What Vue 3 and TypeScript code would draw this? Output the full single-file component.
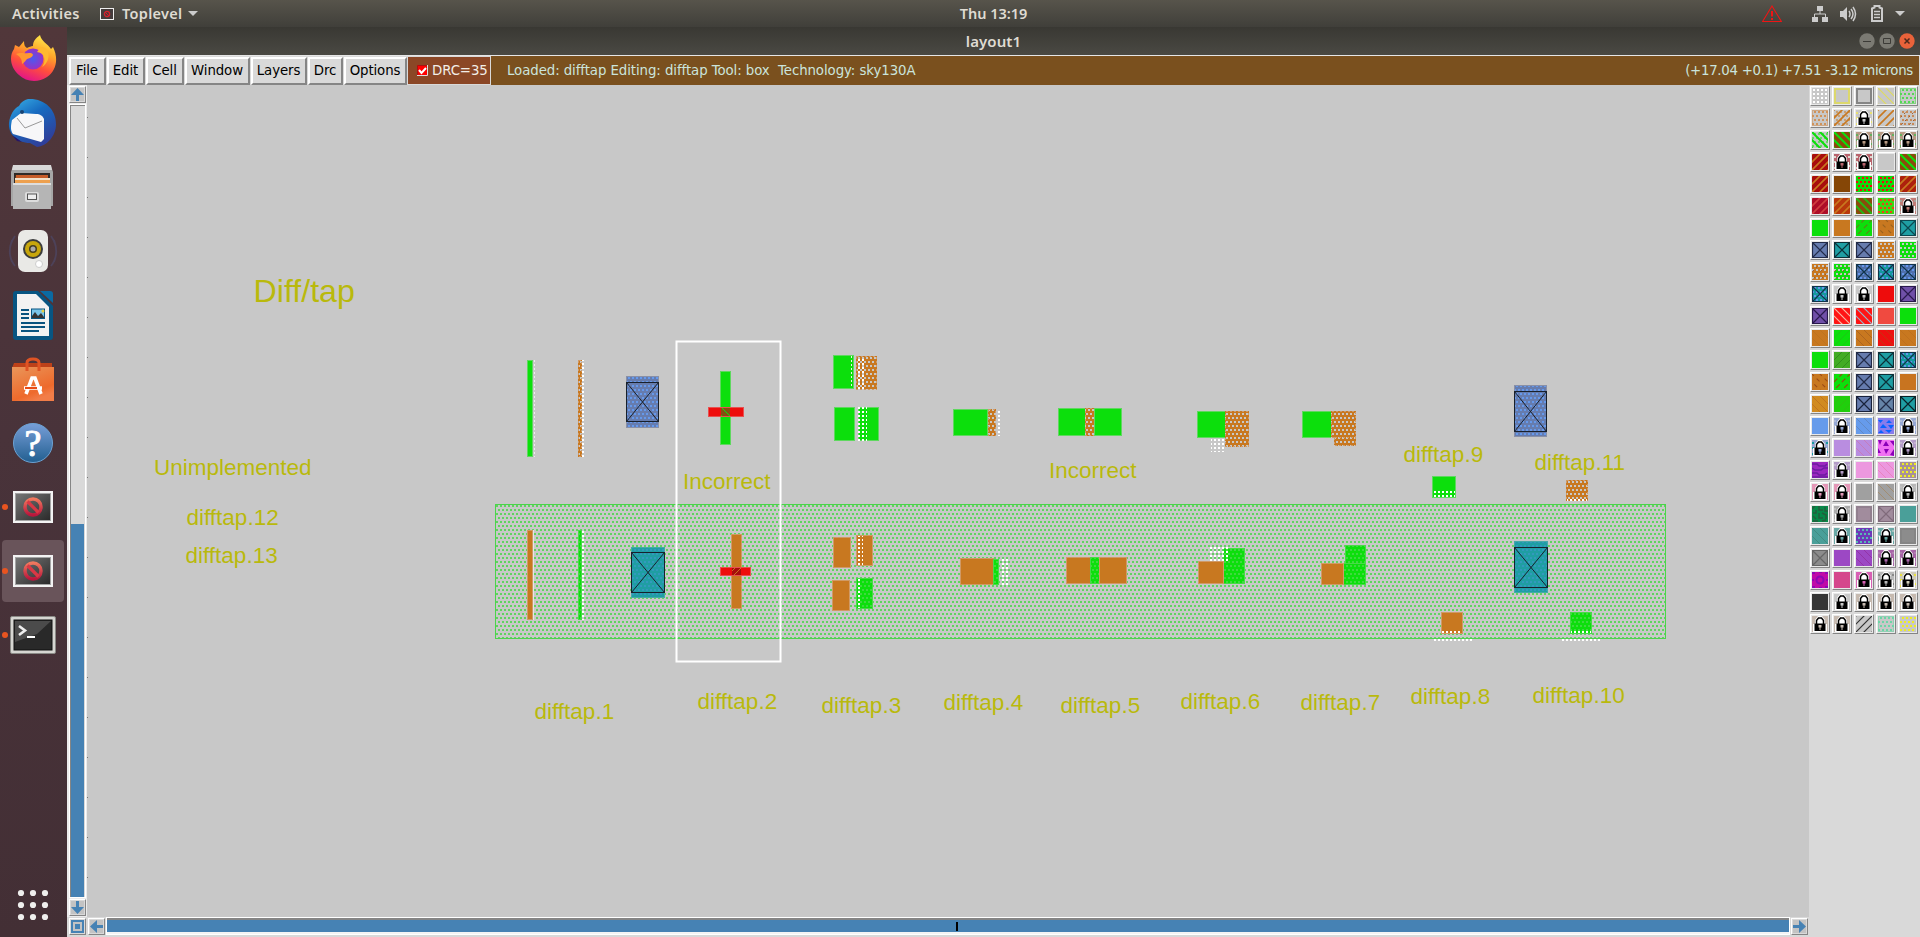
<script setup lang="ts">
type Rect = [kind: string, x: number, y: number, w: number, h: number]
type Label = [text: string, x: number, y: number, size?: number]
interface Swatch { kind: string; base: string; ink: string }

const menus: [string, number][] = [
  ['File', 37], ['Edit', 38], ['Cell', 38], ['Window', 65], ['Layers', 56], ['Drc', 35], ['Options', 63],
]

const G = '#0cdf0c', O = '#c87820', R = '#ee0c0c', B = '#667cae', T = '#1f9ea3', C = '#c8c8c8', P = '#7050a8'
// One entry per layer button: kind|base|ink
const rows: string[][] = [
  [`dots|${C}|#ffffff`, `frame|${C}|#dcd86c`, `frame|${C}|#858585`, `bmid|${C}|#dfdb60`, `dotsf|${C}|#55d855`],
  [`dotsf|${C}|#d0935a`, `dfs|${C}|${O}`, `lock|${C}|#e8e070`, `fs|${C}|${O}`, `dotsb|${C}|#c88a58`],
  [`dbs|${C}|${G}`, `bs|#8b4a0c|${G}`, `lock|#b79a84|#65b060`, `lock|#b79a84|#65b060`, `lock|#b79a84|#65b060`],
  [`fs|#a80d0d|${O}`, 'lock|#b9636c|#ded8ce', 'lock|#b9636c|#ded8ce', `solid|${C}|${C}`, `bs|#8b4a0c|${G}`],
  [`fs|#a80d0d|${O}`, 'solid|#854606|#854606', `dots|${G}|${R}`, `dotsb|${G}|${R}`, `fs|#ad200d|${O}`],
  [`fs|#ad0d28|#d03f40`, `fs|#b8380c|${O}`, `bs|#8b4a0c|#28b414`, `dots|#38d914|#ee4018`, 'lock|#c17d77|#a8a098'],
  [`solid|${G}|${G}`, `solid|${O}|${O}`, `dash|${G}|#628018`, `bdash|${O}|#9a621e`, `x|${T}|#0c4850`],
  [`x|${B}|#222b48`, `x|${T}|#0c3038`, `x|${B}|#222b48`, `dots|${O}|${C}`, `dots|${G}|${C}`],
  [`dotsb|${O}|${C}`, `dotsb|${G}|${C}`, 'xd|#506fa8|#6496eb', 'xd|#159aa0|#6496eb', 'xd|#5071ae|#6496eb'],
  ['xd|#159aa0|#6496eb', 'lock|#c8c8c8|#c8c8c8', 'lock|#c8c8c8|#c8c8c8', `solid|${R}|${R}`, `x|${P}|#29194c`],
  [`x|${P}|#29194c`, 'bmid|#ff1414|#f8b6a0', 'bmid|#ff1414|#9cb3c4', 'solid|#f04a40|#f04a40', `solid|${G}|${G}`],
  [`bthin|${O}|#bb7320`, `fthin|${G}|#22bf16`, `bthin|${O}|#a6611f`, 'bthin|#ee1010|#bb3c12', `bthin|${O}|#be701e`],
  [`solid|${G}|${G}`, 'fthin|#42ac24|#2f881c', `x|${B}|#222b48`, `x|${T}|#0c3038`, 'xd|#159aa0|#6496eb'],
  [`bdash|${O}|#9b4b16`, `dash|${G}|#a04010`, `x|${B}|#222b48`, `x|${T}|#0c3038`, 'solid|#c87420|#c87420'],
  [`bthin|#d18b20|#bc7020`, 'fthin|#20cf0c|#32bc10', `x|${B}|#18213a`, 'x|#6684a8|#222b48', `x|${T}|#082228`],
  ['solid|#669beb|#669beb', 'lock|#95a8d4|#b0bcd8', 'bthin|#669beb|#5f85bd', 'tri|#887cec|#0864ff', 'lock|#95a8d4|#b0bcd8'],
  ['lock|#95a8d4|#189aa0', 'solid|#b98de0|#b98de0', 'bthin|#b98de0|#c778b4', 'trid|#f070f2|#8a00b8', 'lock|#b49cc8|#c4b4d0'],
  ['wave|#9c28c0|#6c1ca0', 'lock|#b49cc8|#c4b4d0', 'solid|#ec98df|#ec98df', 'bthin|#ec98df|#e87eb8', 'dots|#a89099|#eeee22'],
  ['lock|#e498b8|#e498b8', 'lock|#e498b8|#e498b8', 'solid|#a0a0a0|#a0a0a0', 'bthin|#a0a0a0|#a28866', 'lock|#b8b8b8|#c0c0c0'],
  ['maze|#078848|#245e3c', 'lock|#aaaaaa|#c0c0c0', 'frame|#a18c9d|#92808f', 'x|#a18c9d|#806b7b', 'solid|#4a9f99|#4a9f99'],
  ['bthin|#4a9f99|#40887c', 'lock|#6aa9a6|#6aa9a6', 'dots|#6d38b8|#58b9b2', 'lock|#6aa9a6|#a4c0bd', 'frame|#8c8c8c|#858585'],
  ['x|#8c8c8c|#666666', 'solid|#9c48c4|#9c48c4', 'bthin|#9c48c4|#9130a0', 'lock|#a865a8|#b080b0', 'lock|#a865a8|#b080b0'],
  ['ring|#c00aa8|#8c08b4', 'solid|#d5478c|#d5478c', 'lock|#d860b4|#d860b4', 'lock|#b8b8b8|#888888', 'lock|#d0ccb8|#e8e040'],
  ['solid|#363636|#363636', 'lock|#c8c8c8|#c8c8c8', 'lock|#c6bab0|#c6bab0', 'lock|#c6bab0|#c6bab0', 'lock|#c6bab0|#c6bab0'],
  ['lock|#c6bab0|#c6bab0', 'lock|#c6bab0|#c6bab0', `fmid|${C}|#333333`, `dotsf|${C}|#6cd6a6`, `dots|${C}|#eeee22`],
]
const swatches: Swatch[] = rows.flat().map((s) => {
  const [kind, base, ink] = s.split('|')
  return { kind, base, ink }
})

function diagonals(step: number, back: boolean): string {
  let d = ''
  for (let k = back ? -16 : 0; k <= 32; k += step) d += back ? `M${k - 1} -1l18 18` : `M${k + 1} -1l-18 18`
  return d
}
function dotGrid(): string {
  let d = ''
  for (let r = 0; r < 4; r++)
    for (let c = 0; c < 4; c++) d += `M${c * 4 + (r % 2 ? 0 : 2)} ${r * 4 + 1}h2v2h-2z`
  return d
}
const squareGrid = [0, 1, 2, 3].flatMap((r) => [0, 1, 2, 3].map((c) => `M${c * 4 + 1} ${r * 4 + 1}h2v2h-2z`)).join('')
const dots = dotGrid()

function strokeFor(kind: string): { d: string; w: number; dash?: string } | null {
  switch (kind) {
    case 'frame': return { d: 'M1 1h14v14H1z', w: 2 }
    case 'bthin': return { d: diagonals(8, true), w: 0.8 }
    case 'fthin': return { d: diagonals(8, false), w: 0.8 }
    case 'bmid': return { d: diagonals(8, true), w: 1.2 }
    case 'fmid': return { d: diagonals(8, false), w: 1.2 }
    case 'bs': case 'dbs': return { d: diagonals(8, true), w: 2 }
    case 'fs': case 'dfs': return { d: diagonals(8, false), w: 1.6 }
    case 'dash': return { d: diagonals(8, false), w: 1.1, dash: '5 3' }
    case 'bdash': return { d: diagonals(8, true), w: 1.1, dash: '4 4' }
    case 'dotsb': return { d: diagonals(8, false), w: 1, dash: '2 3' }
    case 'x': return { d: 'M.5.5h15v15H.5zM1 1l14 14M15 1L1 15', w: 1.2 }
    case 'wave': return { d: 'M0 2h5l2 2h6l2-2M0 6l3 2h6l3-2h4M0 11h5l2 2h6l2-2M0 15h16', w: 1.4 }
    case 'maze': return { d: 'M0 3l3-3M1 7h3V4M7 0v4h4M13 1v4h3M1 10l3 3M7 7v5h4M10 7l4 2v4M1 15h5M10 15l4-1', w: 1.5 }
    default: return null
  }
}

const shapes: Rect[] = [
  ['g', 527, 360, 6, 97], ['wd', 534, 360, 1, 97],
  ['oh', 578, 360, 4, 97], ['w', 582, 360, 3, 97],
  ['blue', 626, 376, 33, 52],
  ['g', 720, 371, 11, 74], ['r', 708, 407, 36, 10],
  ['g', 833, 355, 21, 34], ['wd', 851, 356, 1, 32], ['oh', 856, 356, 21, 34], ['w', 857, 357, 8, 33],
  ['g', 834, 407, 21, 34], ['g', 858, 407, 21, 34], ['w', 858, 407, 9, 34],
  ['g', 953, 409, 35, 27], ['oh', 988, 409, 8, 27], ['w', 997, 410, 3, 26],
  ['g', 1058, 408, 28, 28], ['oh', 1085, 408, 10, 28], ['g', 1094, 408, 28, 28],
  ['g', 1197, 411, 29, 27], ['oh', 1225, 411, 24, 36], ['ws', 1211, 438, 14, 14],
  ['g', 1302, 411, 30, 27], ['oh', 1331, 411, 25, 27], ['oh', 1334, 437, 22, 9],
  ['blue', 1514, 385, 33, 52],
  ['g', 1432, 476, 24, 22], ['ws', 1433, 489, 22, 8],
  ['oh', 1566, 480, 22, 21], ['ws', 1567, 499, 20, 3],
  ['o', 527, 530, 6, 90], ['wl', 533, 530, 1, 90],
  ['gh', 578, 530, 4, 90], ['w', 582, 530, 3, 90],
  ['teal', 631, 547, 34, 51],
  ['o', 731, 534, 11, 75], ['r', 720, 567, 31, 9],
  ['o', 833, 537, 18, 31], ['o', 856, 535, 17, 31], ['ws', 857, 536, 6, 30],
  ['o', 832, 580, 18, 31], ['gh', 856, 578, 17, 31], ['ws', 857, 579, 4, 29],
  ['o', 960, 558, 34, 27], ['gh', 993, 559, 6, 26], ['ws', 1000, 559, 8, 26],
  ['o', 1066, 557, 25, 27], ['gh', 1090, 557, 10, 27], ['o', 1099, 557, 28, 27],
  ['gh', 1223, 548, 22, 36], ['o', 1198, 561, 26, 23], ['ws', 1210, 547, 18, 14],
  ['gh', 1345, 545, 21, 20], ['gh', 1343, 563, 23, 22], ['o', 1321, 563, 23, 22],
  ['teal', 1514, 541, 34, 52],
  ['o', 1441, 612, 22, 22], ['ws', 1442, 631, 20, 3],
  ['gh', 1570, 612, 22, 22], ['ws', 1571, 631, 20, 3],
  ['ws', 1434, 639, 38, 2], ['ws', 1562, 639, 38, 2],
]
const wells: [number, number, number, number][] = [
  [626.5, 382.5, 32, 39], [1514.5, 391.5, 32, 40], [631.5, 552.5, 33, 40], [1514.5, 547.5, 33, 40],
]
const fills: Record<string, string> = {
  g: G, o: O, r: R, blue: 'url(#blue)', teal: 'url(#teal)', oh: 'url(#oh)', gh: 'url(#gh)', w: 'url(#wsq)', ws: 'url(#wsq)', wd: 'url(#wdash)', wl: '#e6e6e6',
}
const labels: Label[] = [
  ['Diff/tap', 253.5, 302, 32.2], ['Unimplemented', 154, 475], ['difftap.12', 186.5, 524.500], ['difftap.13', 185.5, 562.500],
  ['Incorrect', 683, 489], ['Incorrect', 1049, 478], ['difftap.9', 1403.500, 461.500], ['difftap.11', 1534.500, 469.500],
  ['difftap.1', 534.500, 718.500], ['difftap.2', 697.500, 709], ['difftap.3', 821.500, 713], ['difftap.4', 943.500, 710],
  ['difftap.5', 1060.500, 713], ['difftap.6', 1180.500, 709], ['difftap.7', 1300.500, 710], ['difftap.8', 1410.500, 704], ['difftap.10', 1532.500, 702.500],
]
const ticks = Array.from({ length: 20 }, (_, i) => 117 + i * 40)
const outlined = (k: string) => ['g', 'o', 'r', 'oh', 'gh', 'blue', 'teal'].includes(k)
const edge: Record<string, string> = { g: '#5fd85f', o: '#d09a66', r: '#e85050', oh: '#cf9a68', gh: '#48da48', blue: '#8890a8', teal: '#45a9a8' }
</script>

<template>
  <div class="desktop">
    <header class="topbar">
      <span class="activities">Activities</span>
      <svg class="appicon" width="14" height="12" viewBox="0 0 14 12"><rect x=".5" y=".5" width="13" height="11" fill="#443c3c" stroke="#eee" /><circle cx="7" cy="6" r="2.6" fill="none" stroke="#d8202c" stroke-width="1.3" /><path d="M5.2 4l3.6 4" stroke="#d8202c" /></svg>
      <span>Toplevel</span>
      <svg class="caret" width="10" height="5" viewBox="0 0 10 5"><path d="M0 0h10L5 5z" fill="#ccc" /></svg>
      <span class="clock">Thu 13:19</span>
      <div class="tray">
        <svg width="20" height="18" viewBox="0 0 20 18"><path d="M10 1L19.4 16.5H.6z" fill="none" stroke="#ef1515" stroke-width="1.1" /><path d="M10 6v5.5M10 13v2" stroke="#ef1515" stroke-width="2" /></svg>
        <svg class="net" width="16" height="16" viewBox="0 0 16 16"><path d="M5 0h6v5H5zM0 11h6v5H0zM10 11h6v5h-6z" fill="#ccc" /><path d="M8 5v3M2.5 11V8h11v3" fill="none" stroke="#ccc" /></svg>
        <svg class="vol" width="17" height="16" viewBox="0 0 17 16"><path d="M0 5h3l4-4v14l-4-4H0z" fill="#ccc" /><path d="M9 5q2 3 0 6M11 3q4 5 0 10M13 1q5 7 0 14" fill="none" stroke="#ccc" stroke-width="1.5" /></svg>
        <svg class="bat" width="12" height="17" viewBox="0 0 12 17"><path d="M3.5 2.5V1h5v1.500L11 3.500v12.500H1V3.500z" fill="none" stroke="#ccc" stroke-width="2" /><path d="M3 6.500h6M3 9.500h6M3 12.500h6" stroke="#ccc" stroke-width="1.700" /></svg>
        <svg class="down" width="10" height="5" viewBox="0 0 10 5"><path d="M0 0h10L5 5z" fill="#ccc" /></svg>
      </div>
    </header>

    <div class="work">
      <nav class="dock">
        <div class="slot"><svg width="50" height="50" viewBox="0 0 50 50">
          <defs>
            <linearGradient id="fx" x1=".8" y1="0" x2=".4" y2="1"><stop offset="0" stop-color="#fff44f" /><stop offset=".38" stop-color="#ffa52a" /><stop offset=".68" stop-color="#ff4f3c" /><stop offset="1" stop-color="#e31587" /></linearGradient>
            <radialGradient id="fxc"><stop offset="0" stop-color="#4b5af0" /><stop offset="1" stop-color="#9a31c4" /></radialGradient>
          </defs>
          <path d="M32 1c1 6 8 9 11 14l2-2c6 12 3 24-6 30-9 6-21 5-28-2C2 33 1 22 6 15l1-4 4 2 5-6c0 4 1 6 3 7 2-1 4-2 6-2C25 7 28 4 32 1z" fill="url(#fx)" />
          <circle cx="25" cy="25" r="10.500" fill="url(#fxc)" />
          <path d="M8 20c5-2 7 0 13-1 4 0 6 2 1 5-5 1-4 4-8 6 0-4-1-7-6-10z" fill="#ff9830" /><path d="M29 18c9 1 9 10 5 15 9-5 9-20-1-20z" fill="#ffb92f" />
        </svg></div>
        <div class="slot"><svg width="50" height="50" viewBox="0 0 50 50">
          <defs><linearGradient id="tb" x1="0" y1="0" x2=".6" y2="1"><stop offset="0" stop-color="#3bb3e8" /><stop offset=".45" stop-color="#176bc0" /><stop offset="1" stop-color="#2f3f9a" /></linearGradient></defs>
          <path d="M20 1c16-1 28 10 28 25 0 12-9 22-19 23l-7-4C9 45 0 36 1 25 2 17 6 10 11 8c2-4 5-6 9-7z" fill="url(#tb)" />
          <path d="M4 22l9-7 15 1c4 0 7 2 8 5v20l-3 3L5 36c-3-4-2-9-1-14z" fill="#f7f7f8" /><path d="M9 20l8 10 17-7" fill="none" stroke="#999" /><path d="M4 37l10 7-5-1z" fill="#261568" /><circle cx="14" cy="14" r="2" fill="#174372" />
        </svg></div>
        <div class="slot"><svg width="44" height="44" viewBox="0 0 44 44">
          <path d="M2 1h38l2 6v34H0V7z" fill="#a6a6a6" /><path d="M2 0h38l1 5H1z" fill="#d8d8d8" /><path d="M3 8h36v12H3z" fill="#302a27" /><path d="M5 10h32v10H4z" fill="#c65c28" /><path d="M4 13h35v6H4z" fill="#f2e0c8" /><path d="M4 15h35v3H4z" fill="#eda04e" /><path d="M2 18h38v26H2z" fill="#b5b5b5" /><path d="M2 18h38v2H2z" fill="#ddd" /><rect x="14" y="27" width="14" height="10" rx="2" fill="#ddd" /><rect x="16.500" y="29" width="9" height="5.500" fill="#eee" stroke="#555" />
        </svg></div>
        <div class="slot"><svg width="50" height="50" viewBox="0 0 50 50">
          <path d="M7 10C0 20 0 31 7 40M43 10c7 10 7 21 0 30M4 14c-3 8-3 15 0 22M46 14c3 8 3 15 0 22" fill="none" stroke="#4d4259" stroke-width="1.800" /><rect x="10" y="4" width="30" height="42" rx="7" fill="#e9e9e6" /><circle cx="25" cy="23" r="10" fill="#3b3c3c" /><circle cx="25" cy="23" r="8" fill="#c7a60c" /><circle cx="25" cy="23" r="4" fill="#463e20" /><circle cx="25" cy="23" r="2.500" fill="#aaa" /><circle cx="31" cy="38" r="3.500" fill="#fff" stroke="#ccc" />
        </svg></div>
        <div class="slot"><svg width="40" height="50" viewBox="0 0 40 50">
          <path d="M3 1h22l15 15v31q0 3-3 3H3q-3 0-3-3V4q0-3 3-3z" fill="#075582" /><path d="M4 4h19l13 13v29H4z" fill="#f2f2f2" /><path d="M27 1h10q3 0 3 3v9z" fill="#0b6aa2" /><path d="M8 20h8M8 24h8M8 28h8M8 33h24M8 37h24M8 41h18" stroke="#09537f" stroke-width="2" /><rect x="18.500" y="19" width="13" height="9.500" fill="#78c4e9" stroke="#075582" /><path d="M19 28v-2l3-4 3 4 3-3 3 4v1z" fill="#333" /><circle cx="30" cy="21" r="1.500" fill="#e8d040" />
        </svg></div>
        <div class="slot"><svg width="44" height="46" viewBox="0 0 44 46">
          <defs><linearGradient id="bag" x1="0" y1="0" x2=".5" y2="1"><stop offset="0" stop-color="#e9965a" /><stop offset=".8" stop-color="#ee6a2c" /><stop offset="1" stop-color="#f27d48" /></linearGradient></defs>
          <path d="M3 7h38v5H1z" fill="#bd4119" /><path d="M1 11h42v34H1z" fill="url(#bag)" /><path d="M16 15V7q0-4 6-4t6 4v8" fill="none" stroke="#df5424" stroke-width="3" /><path d="M15 38l6-16h3l6 16M13 32h18" fill="none" stroke="#fff" stroke-width="3.600" /><path d="M14 32h12" stroke="#e94d16" stroke-width="2" />
        </svg></div>
        <div class="slot"><svg width="42" height="42" viewBox="0 0 42 42">
          <defs><linearGradient id="hp" x1="0" y1="0" x2="0" y2="1"><stop offset="0" stop-color="#779ed8" /><stop offset="1" stop-color="#225f90" /></linearGradient></defs><circle cx="21" cy="21" r="19.500" fill="url(#hp)" stroke="#6ca2d3" /><text x="21" y="34" text-anchor="middle" class="q">?</text>
        </svg></div>
        <div v-for="n in 2" :key="n" class="slot running" :class="{ active: n === 2 }"><svg width="40" height="32" viewBox="0 0 40 32">
          <defs><linearGradient id="scr" x1="0" y1="0" x2="1" y2="1"><stop offset="0" stop-color="#777" /><stop offset="1" stop-color="#292929" /></linearGradient><linearGradient id="no" x1="0" y1="0" x2="0" y2="1"><stop offset="0" stop-color="#f0785e" /><stop offset="1" stop-color="#b9163c" /></linearGradient></defs>
          <path d="M0 0h40v32H0z" fill="#f3f3f3" /><rect x="2.500" y="2.500" width="35" height="27" fill="url(#scr)" stroke="#a4a4a4" /><circle cx="20" cy="16" r="8" fill="none" stroke="url(#no)" stroke-width="3.500" /><path d="M14.500 10.500l11 11" stroke="#d93845" stroke-width="3.200" />
        </svg></div>
        <div class="slot running"><svg width="46" height="38" viewBox="0 0 46 38">
          <rect x=".5" y=".5" width="45" height="37" rx="1.500" fill="#d6d6d2" stroke="#8a8a86" /><rect x="4" y="4" width="38" height="30" fill="#292929" stroke="#111" /><path d="M5 5h36L27 18 5 26z" fill="#4b4b4b" /><path d="M9 10l6 4.500-6 4.500" fill="none" stroke="#eee" stroke-width="2.600" /><path d="M17 21h8" stroke="#fff" stroke-width="2" />
        </svg></div>
        <svg class="apps" width="32" height="32" viewBox="0 0 32 32"><template v-for="r in 3" :key="r"><circle v-for="c in 3" :key="c" :cx="c * 12 - 8" :cy="r * 12 - 8" r="3.100" fill="#efefed" /></template></svg>
      </nav>

      <main class="window">
        <div class="titlebar"><span>layout1</span>
          <div class="winbtns">
            <svg width="16" height="16" viewBox="0 0 16 16"><circle cx="8" cy="8" r="7.700" fill="#7b7a73" /><path d="M4 8.500h8" stroke="#3c3b37" /></svg>
            <svg width="16" height="16" viewBox="0 0 16 16"><circle cx="8" cy="8" r="7.700" fill="#7b7a73" /><path d="M4.500 5.500h7v5h-7z" fill="none" stroke="#3c3b37" /></svg>
            <svg width="16" height="16" viewBox="0 0 16 16"><circle cx="8" cy="8" r="7.700" fill="#e9623a" /><path d="M5.500 5.500l5 5m0-5l-5 5" stroke="#4e291c" stroke-width="1.500" /></svg>
          </div>
        </div>
        <div class="menubar">
          <button v-for="m in menus" :key="m[0]" class="menu" :style="{ width: m[1] + 'px' }">{{ m[0] }}</button>
          <div class="drc"><svg width="11" height="11" viewBox="0 0 11 11"><path d="M0 0h11v11H0z" fill="#f00" /><path d="M.5 11V.5H11" fill="none" stroke="#a11" /><path d="M0 10.500h10.500V0" fill="none" stroke="#ddd" /><path d="M2 5l2.500 3L9 3" fill="none" stroke="#fff" stroke-width="2" /></svg><span>DRC=35</span></div>
          <div class="status"><span class="loaded">Loaded: difftap Editing: difftap Tool: box&nbsp; Technology: sky130A</span><span class="coords">(+17.04 +0.1) +7.51 -3.12 microns</span></div>
        </div>

        <div class="body">
          <div class="left">
            <div class="upper">
              <div class="vscroll">
                <div class="btn"><svg width="13" height="13" viewBox="0 0 13 13"><path d="M6.500 0L13 7H8v6H5V7H0z" /></svg></div>
                <div class="trough"><div class="thumb" /></div>
                <div class="btn"><svg width="13" height="13" viewBox="0 0 13 13"><path d="M6.500 13L13 6H8V0H5v6H0z" /></svg></div>
              </div>
              <svg class="canvas" width="1722" height="832" viewBox="87 85 1722 832" shape-rendering="crispEdges">
                <defs>
                  <pattern id="nwell" width="4" height="8" patternUnits="userSpaceOnUse"><path d="M0 1h2v2H0zM2 5h2v2H2z" fill="#5fd45f" /></pattern>
                  <pattern id="oh" width="4" height="8" patternUnits="userSpaceOnUse"><path d="M0 0h4v8H0z" fill="#c87820" /><path d="M0 1h2v2H0zM2 5h2v2H2z" fill="#c8c8c8" /></pattern>
                  <pattern id="gh" width="4" height="8" patternUnits="userSpaceOnUse"><path d="M0 0h4v8H0z" fill="#0cdf0c" /><path d="M0 1h2v2H0zM2 5h2v2H2z" fill="#40d840" /></pattern>
                  <pattern id="blue" width="4" height="8" patternUnits="userSpaceOnUse"><path d="M0 0h4v8H0z" fill="#667cae" /><path d="M0 1h2v2H0zM2 5h2v2H2z" fill="#6599ec" /></pattern>
                  <pattern id="teal" width="4" height="8" patternUnits="userSpaceOnUse"><path d="M0 0h4v8H0z" fill="#1f9ea3" /><path d="M0 1h2v2H0zM2 5h2v2H2z" fill="#3399bd" /></pattern>
                  <pattern id="wsq" width="4" height="4" patternUnits="userSpaceOnUse"><path d="M2 3h2v1H2zM2 0h2v1H2z" fill="#fff" /></pattern>
                  <pattern id="wdash" width="4" height="4" patternUnits="userSpaceOnUse"><path d="M0 0h4v2H0z" fill="#eee" /></pattern>
                </defs>
                <rect x="87" y="85" width="1722" height="832" fill="#c8c8c8" />
                <rect v-for="t in ticks" :key="t" x="87" :y="t" width="1" height="1" fill="#777" />
                <rect x="495.500" y="504.500" width="1170" height="134" fill="url(#nwell)" stroke="#4bd44b" />
                <template v-for="(s, i) in shapes" :key="i">
                  <rect :x="s[1]" :y="s[2]" :width="s[3]" :height="s[4]" :fill="fills[s[0]]" />
                  <rect v-if="outlined(s[0])" :x="s[1] + 0.5" :y="s[2] + 0.5" :width="s[3] - 1" :height="s[4] - 1" fill="none" :stroke="edge[s[0]]" :stroke-dasharray="s[0] === 'oh' ? '2 2' : undefined" />
                </template>
                <g fill="none" stroke="#17202c">
                  <template v-for="w in wells" :key="w[0] + w[1]">
                    <rect :x="w[0]" :y="w[1]" :width="w[2]" :height="w[3]" />
                    <path shape-rendering="auto" :d="`M${w[0]} ${w[1]}l${w[2]} ${w[3]}m0 ${-w[3]}l${-w[2]} ${w[3]}`" />
                  </template>
                </g>
                <path d="M721 408h9v8h-9z" fill="#82500f" /><path d="M722 408l8 8M721 415l1 1" stroke="#0cdf0c" shape-rendering="auto" />
                <path d="M732 568h9v7h-9z" fill="#a70d0d" /><path d="M734 575l7-7M732 571l3-3" stroke="#c87820" shape-rendering="auto" />
                <rect x="676.500" y="341.500" width="104" height="320" fill="none" stroke="#fff" stroke-width="2" shape-rendering="auto" />
                <text v-for="l in labels" :key="l[0] + l[1]" class="label" :x="l[1]" :y="l[2]" :font-size="l[3] ?? 22.5">{{ l[0] }}</text>
              </svg>
            </div>
            <div class="hscroll">
              <div class="btn corner"><svg width="13" height="13" viewBox="0 0 13 13"><path d="M0 0h13v13H0zM2 2v9h9V2zM4 4h5v5H4z" fill-rule="evenodd" /><path d="M5.500 5.500h2v2h-2z" /></svg></div>
              <div class="btn"><svg width="13" height="13" viewBox="0 0 13 13"><path d="M0 6.500L7 0v5h6v3H7v5z" /></svg></div>
              <div class="htrough"><i /></div>
              <div class="btn"><svg width="13" height="13" viewBox="0 0 13 13"><path d="M13 6.500L6 0v5H0v3h6v5z" /></svg></div>
            </div>
          </div>

          <aside class="palette">
            <div v-for="(s, i) in swatches" :key="i" class="swatch">
              <svg width="16" height="16" viewBox="0 0 16 16">
                <rect width="16" height="16" :fill="s.base" />
                <template v-if="s.kind === 'lock'">
                  <path d="M0 3h2M0 8h2M14 3h2M14 12h2M0 14h2" :stroke="s.ink" stroke-width="2" />
                  <path d="M3 8V4l3-4h4l3 4v4h2v8H1V8z" fill="#fff" />
                  <path d="M4.500 9V4.500L6.500 2h3l2 2.500V9" fill="none" stroke="#000" stroke-width="1.500" />
                  <path d="M2.500 7.500h11V15h-11z" fill="#000" /><path d="M6.500 9h3v2.500h-1V14h-1v-2.500h-1z" :fill="s.base" />
                </template>
                <path v-else-if="s.kind === 'tri'" d="M0 2h5L2.500 5zM8 5l3-3 3 3zM2 10l3-4 4 4zM10 7h6l-3 4zM0 15l3-3 3 3zM7 12h7l-3 3z" :fill="s.ink" />
                <path v-else-if="s.kind === 'trid'" d="M0 0h4L2 5zM5 6l3-5 3 5zM12 1h4v5zM0 8l3 5H0zM6 9h5l-3 5zM12 15l4-6v7z" :fill="s.ink" />
                <g v-else-if="s.kind === 'ring'" fill="none" :stroke="s.ink" stroke-width="2"><path d="M0 1h3M13 1h3M0 15h3M13 15h3M7 0h3M7 16h3M0 8h2M14 8h2" /><circle cx="8" cy="8" r="3.500" /></g>
                <template v-else-if="s.kind === 'xd'"><path :d="dots" :fill="s.ink" /><path d="M.5.5h15v15H.5zM1 1l14 14M15 1L1 15" fill="none" stroke="#10344c" stroke-width="1.200" /></template>
                <template v-else>
                  <path v-if="s.kind.startsWith('d') && s.kind !== 'dash'" :d="s.ink === '#ffffff' ? squareGrid : dots" :fill="s.ink" :opacity="s.kind === 'dfs' || s.kind === 'dbs' ? 0.5 : 1" />
                  <rect v-if="s.kind === 'dotsf'" x=".5" y=".5" width="15" height="15" fill="none" :stroke="s.ink" opacity=".6" />
                  <path v-if="strokeFor(s.kind)" :d="strokeFor(s.kind)!.d" fill="none" :stroke="s.kind === 'dotsb' ? '#a05a28' : s.ink" :stroke-width="strokeFor(s.kind)!.w" :stroke-dasharray="strokeFor(s.kind)!.dash" />
                </template>
              </svg>
            </div>
          </aside>
        </div>
      </main>
    </div>
  </div>
</template>

<style>
body { margin: 0; overflow: hidden; }
</style>
<style scoped>
* { box-sizing: border-box; }
.desktop { width: 1920px; height: 937px; display: flex; flex-direction: column; background: #d9d9d9; font-family: "DejaVu Sans", sans-serif; }
svg { display: block; flex: none; }
.topbar { position: relative; height: 27px; flex: none; display: flex; align-items: center; padding-left: 12px; background: linear-gradient(#57544b, #403f3a); color: #dfdbd2; font: 600 14.5px/27px "Noto Sans", "Open Sans", sans-serif; }
.activities { width: 88px; }
.appicon { margin-right: 8px; }
.caret { margin-left: 6px; }
.topbar > span { font-size: 14.5px; letter-spacing: .3px; line-height: 26px; padding-bottom: 1px; }
.topbar > .clock { position: absolute; left: 0; right: 0; padding-left: 67px; text-align: center; letter-spacing: 0; }
.tray { margin-left: auto; display: flex; align-items: center; padding-right: 15px; }
.net { margin-left: 30px; }
.vol { margin-left: 12px; }
.bat { margin-left: 14px; }
.down { margin-left: 12px; }
.work { flex: 1; min-height: 0; display: flex; }
.dock { width: 67px; flex: none; display: flex; flex-direction: column; align-items: center; background: linear-gradient(#51373a, #49333a 45%, #432f35); padding-right: 1px; }
.slot { position: relative; width: 62px; height: 62px; margin: 1px 0; flex: none; display: flex; align-items: center; justify-content: center; border-radius: 4px; }
.active { background: #69545a; }
.running::before { content: ""; position: absolute; left: 0; top: 28px; width: 6px; height: 6px; border-radius: 50%; background: #e95420; }
.apps { margin: auto 0 16px; }
.q { font: 38px "Liberation Serif", serif; fill: #fff; stroke: #fff; }
.window { width: 1853px; display: flex; flex-direction: column; }
.titlebar { position: relative; height: 28px; flex: none; display: flex; align-items: center; justify-content: center; background: linear-gradient(#393833, #4a4943); color: #dfdbd2; font: 600 15px/28px "Noto Sans", "Open Sans", sans-serif; letter-spacing: .1px; }
.winbtns { position: absolute; right: 5px; top: 6px; display: flex; gap: 4px; }
.menubar { height: 30px; flex: none; display: flex; border-top: 1px solid #e6e6e6; background: #d9d9d9; font-size: 13.33px; padding-left: 2px; }
.menu { height: 28px; margin: 1px 1px 0 0; padding: 0 1px 0 0; border: 2px solid; border-color: #fff #858585 #858585 #fff; background: #d9d9d9; color: #000; font: 13.33px/22px "DejaVu Sans", sans-serif; letter-spacing: -.1px; }
.drc { width: 83px; margin: 1px 0 0; display: flex; align-items: center; background: #8b4726; border: solid #d9d9d9; border-width: 0 1px 1px 0; color: #f2eee8; padding-left: 9px; }
.drc span { margin-left: 4px; white-space: nowrap; letter-spacing: -.1px; }
.status { flex: 1; margin-right: 1px; display: flex; justify-content: space-between; align-items: center; background: #7a501e; color: #cbe4dc; padding: 0 6px 0 16px; }
.loaded { letter-spacing: -.08px; }
.coords { letter-spacing: -.28px; }
.body { flex: 1; min-height: 0; display: flex; }
.left { width: 1742px; flex: none; display: flex; flex-direction: column; }
.upper { height: 832px; display: flex; }
.vscroll { width: 20px; flex: none; display: flex; flex-direction: column; align-items: flex-start; background: #ececec; padding: 1px 0 1px 2px; gap: 1px; }
.btn { width: 17px; height: 17px; flex: none; display: flex; align-items: center; justify-content: center; border: 1px solid; border-color: #fff #858585 #858585 #fff; box-shadow: inset 0 0 0 1px #d9d9d9; background: #c3c3c3; }
.btn path { fill: #4682b4; }
.trough { flex: 1; width: 17px; padding-left: 1px; border: 1px solid #fff; background: #d9d9d9; box-shadow: inset 1px 1px #858585; display: flex; flex-direction: column; justify-content: flex-end; }
.thumb { width: 13px; height: 373px; background: #4682b4; }
.canvas { width: 1722px; height: 832px; }
.label { font-family: "Liberation Sans", Arial, sans-serif; fill: #b9b90c; font-variant-ligatures: none; shape-rendering: auto; }
.hscroll { height: 20px; display: flex; align-items: flex-start; padding: 1px 1px 0 2px; gap: 2px; background: #d9d9d9; }
.htrough { flex: 1; height: 18px; margin: -1px -1px 0; display: flex; justify-content: center; align-items: center; border: 1px solid #fff; background: #4682b4; box-shadow: inset 0 2px #858585, inset 0 -2px #f4f4f4; }
.htrough i { width: 2px; height: 9px; margin-left: 18px; background: #000; }
.palette { width: 111px; padding: 1px 0 0 1px; display: grid; grid-template-columns: repeat(5, 20px); grid-auto-rows: 20px; gap: 2px; align-content: start; background: #d9d9d9; }
.swatch { width: 20px; height: 20px; padding: 1px; border: 1px solid; border-color: #fff #858585 #858585 #fff; background: #e8e8e8; }
</style>
